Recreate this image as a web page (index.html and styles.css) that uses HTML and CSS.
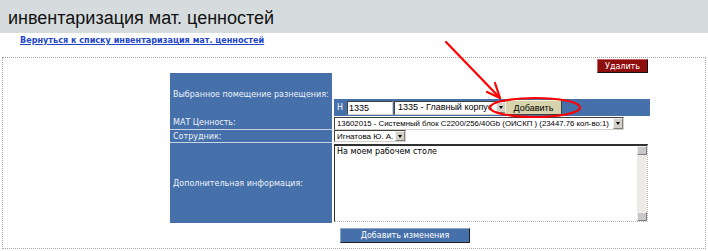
FILE: index.html
```html
<!DOCTYPE html>
<html lang="ru">
<head>
<meta charset="utf-8">
<title>инвентаризация мат. ценностей</title>
<link rel="stylesheet" href="styles.css">
</head>
<body>
<div class="header"><h1 class="title">инвентаризация мат. ценностей</h1></div>
<div class="back"><a href="#" class="backlink">Вернуться к списку инвентаризация мат. ценностей</a></div>
<div class="panel">
  <div class="toolbar"><span class="btn-delete">Удалить</span></div>
  <div class="form">
    <div class="label">Выбранное помещение разнещения:</div>
    <div class="value v1">
      <div class="strip">
        <span class="h">Н</span>
        <span class="input in-room">1335</span>
        <span class="select sel-room"><span class="sel-text">1335 - Главный корпус</span><span class="drop"><i></i></span></span>
        <span class="btn-add">Добавить</span>
      </div>
    </div>
    <div class="label sep">МАТ Ценность:</div>
    <div class="value v2"><span class="select sel-asset"><span class="sel-text">13602015 - Системный блок C2200/256/40Gb (ОИСКП ) (23447.76 кол-во:1)</span><span class="drop"><i></i></span></span></div>
    <div class="label sep">Сотрудник:</div>
    <div class="value v3"><span class="select sel-emp"><span class="sel-text">Игнатова Ю. А.</span><span class="drop"><i></i></span></span></div>
    <div class="label l4">Дополнительная информация:</div>
    <div class="value v4">
      <div class="textarea">
        <span class="ta-text">На моем рабочем столе</span>
        <div class="scroll"><span class="sb-btn"></span><span class="sb-track"></span><span class="sb-btn"></span></div>
      </div>
    </div>
  </div>
  <div class="actions"><span class="btn-save">Добавить изменения</span></div>
</div>
<svg class="annot" width="708" height="251" viewBox="0 0 708 251" xmlns="http://www.w3.org/2000/svg">
  <g fill="none" stroke="#ff0000" stroke-width="2.2" stroke-linecap="round">
    <path d="M446 42 L500 98"/>
    <path d="M500 98 L487 92"/>
    <path d="M500 98 L495 83"/>
    <ellipse cx="535" cy="107.5" rx="45" ry="9.5"/>
  </g>
</svg>
</body>
</html>
```
FILE: styles.css
```css
* { box-sizing: border-box; }
html, body { margin: 0; padding: 0; background: #ffffff; }
body {
  width: 708px;
  height: 251px;
  position: relative;
  overflow: hidden;
  font-family: "DejaVu Sans", Verdana, sans-serif;
  font-size: 8px;
  color: #000;
}
.header {
  height: 33px;
  background: #d6dcdd;
  display: flex;
  align-items: flex-end;
  padding-left: 8px;
  padding-bottom: 5px;
}
.title {
  margin: 0;
  font-family: "Liberation Sans", Arial, sans-serif;
  font-weight: normal;
  font-size: 18px;
  line-height: 20px;
  color: #111;
}
.back {
  height: 24px;
  padding-left: 20px;
  padding-top: 2px;
}
.backlink {
  font-family: "DejaVu Sans", Verdana, sans-serif;
  font-weight: bold;
  font-size: 8.1px;
  line-height: 10px;
  color: #2346c8;
  text-decoration: underline;
}
.panel {
  margin: 0 2px;
  height: 192px;
  border: 1px dotted #a8a8a8;
  display: flex;
  flex-direction: column;
}
.toolbar {
  height: 15px;
  display: flex;
  justify-content: flex-end;
  padding-right: 57px;
  padding-top: 1px;
}
.btn-delete {
  width: 51px;
  height: 14px;
  background: #8e0d0d;
  color: #fff;
  border: 1px solid #5a0000;
  border-right-color: #111;
  border-bottom-color: #111;
  border-top-color: #c06060;
  border-left-color: #c06060;
  display: flex;
  align-items: center;
  justify-content: center;
  font-size: 8px;
}
.form {
  margin-left: 167px;
  display: grid;
  grid-template-columns: 162px 316px;
  grid-template-rows: 43px 14px 13px 80px;
  column-gap: 2px;
}
.label {
  background: #4570aa;
  color: #eef2f8;
  display: flex;
  align-items: center;
  padding-left: 3px;
  font-size: 8px;
  white-space: nowrap;
}
.label.sep { border-bottom: 1px solid #c9d4e4; }
.value { display: flex; }
.v1 { align-items: flex-end; }
.strip {
  width: 316px;
  height: 17px;
  background: #4570aa;
  display: flex;
  align-items: center;
  padding-left: 3px;
}
.h {
  color: #fff;
  font-size: 8px;
  width: 10px;
}
.input, .select, .textarea {
  background: #fff;
  border: 1px solid #d4d0c8;
  border-top-color: #404040;
  border-left-color: #404040;
}
.input {
  width: 46px;
  height: 14px;
  font-family: "Liberation Sans", Arial, sans-serif;
  font-size: 9px;
  line-height: 12px;
  padding-left: 1px;
}
.select {
  display: flex;
  align-items: center;
  height: 13px;
  overflow: hidden;
}
.sel-text {
  flex: 1;
  overflow: hidden;
  white-space: nowrap;
  font-family: "Liberation Sans", Arial, sans-serif;
  font-size: 8px;
  line-height: 11px;
  padding-left: 2px;
}
.drop {
  width: 10px;
  height: 11px;
  flex: none;
  background: #d4d0c8;
  border: 1px solid #808080;
  border-top-color: #f0f0f0;
  border-left-color: #f0f0f0;
  display: flex;
  align-items: center;
  justify-content: center;
}
.drop i {
  width: 0;
  height: 0;
  border-left: 2px solid transparent;
  border-right: 2px solid transparent;
  border-top: 3px solid #000;
}
.sel-room {
  width: 113px;
  height: 14px;
  margin-left: 1px;
}
.sel-room .sel-text { font-size: 9px; padding-left: 3px; }
.btn-add {
  width: 57px;
  height: 15px;
  margin-left: -2px;
  background: #d6d3ad;
  border: 1px solid #404040;
  border-top-color: #f4f2dc;
  border-left-color: #f4f2dc;
  display: flex;
  align-items: center;
  justify-content: center;
  font-family: "Liberation Sans", Arial, sans-serif;
  font-size: 9px;
}
.v2 { align-items: flex-start; padding-top: 1px; }
.sel-asset { width: 290px; height: 13px; }
.sel-asset .sel-text { font-size: 7.8px; }
.v3 { align-items: flex-start; }
.sel-emp { width: 72px; height: 12px; }
.sel-emp .drop { height: 10px; }
.v4 { align-items: flex-start; padding-top: 1px; }
.textarea {
  width: 314px;
  height: 78px;
  position: relative;
  display: flex;
  justify-content: space-between;
  border-top: 2px solid #303030;
  border-left: 1px solid #303030;
  border-bottom: 1px dotted #b8b8b8;
  border-right: 1px dotted #b8b8b8;
}
.ta-text {
  font-size: 8px;
  line-height: 11px;
  padding-left: 2px;
}
.scroll {
  width: 10px;
  display: flex;
  flex-direction: column;
  background: #ecebe8;
}
.sb-btn {
  height: 9px;
  background: #c8c8c8;
  border: 1px solid #808080;
  border-top-color: #f0f0f0;
  border-left-color: #f0f0f0;
}
.sb-track { flex: 1; }
.actions {
  margin-top: 5px;
  padding-left: 337px;
  display: flex;
}
.btn-save {
  width: 130px;
  height: 15px;
  background: #4570aa;
  color: #fff;
  border: 1px solid #202020;
  border-top-color: #8fa6c8;
  border-left-color: #8fa6c8;
  display: flex;
  align-items: center;
  justify-content: center;
  font-size: 8px;
}
.annot {
  position: absolute;
  left: 0;
  top: 0;
  pointer-events: none;
}
```
